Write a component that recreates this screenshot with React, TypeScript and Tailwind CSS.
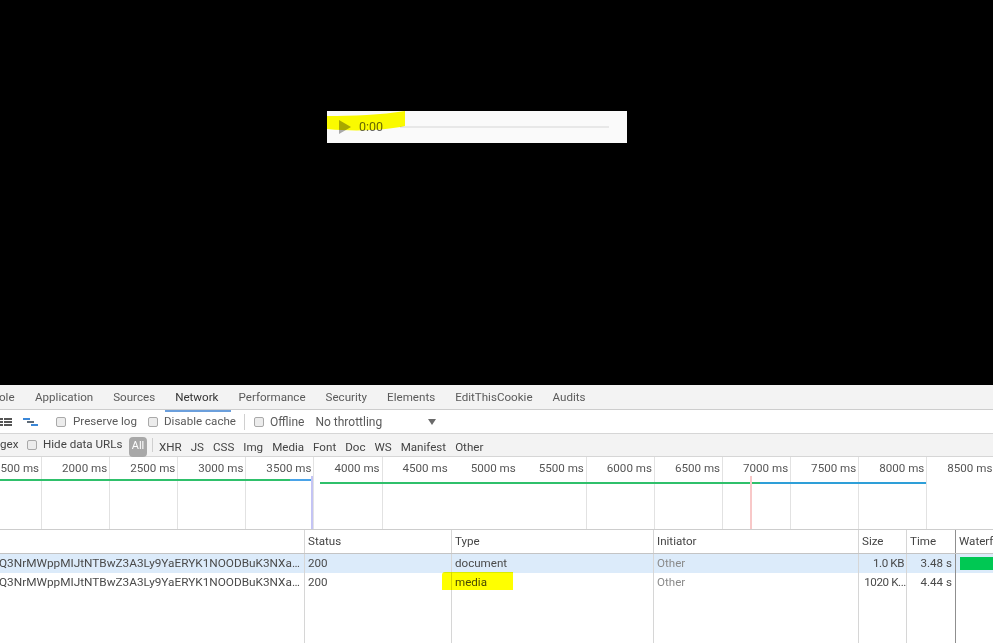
import React from "react";

const tabs = ["Application", "Sources", "Network", "Performance", "Security", "Elements", "EditThisCookie", "Audits"];
const filters = ["XHR", "JS", "CSS", "Img", "Media", "Font", "Doc", "WS", "Manifest", "Other"];
const ticks = [1500, 2000, 2500, 3000, 3500, 4000, 4500, 5000, 5500, 6000, 6500, 7000, 7500, 8000, 8500];
const noLine = [4500, 5000, 8500];
const name = "Q3NrMWppMIJtNTBwZ3A3Ly9YaERYK1NOODBuK3NXa...";
const columns = "grid grid-cols-[305px_147px_202px_205px_48px_49px_37px]";

const Check = ({ className = "" }: { className?: string }) => (
  <span className={`h-[10px] w-[10px] shrink-0 rounded-[2px] border border-[#a9a9a9] bg-[#ececec] ${className}`} />
);

const Cell = ({ children, className = "" }: { children?: React.ReactNode; className?: string }) => (
  <div className={`relative truncate border-r border-[#d6d6d6] pl-[3px] pr-[3px] ${className}`}>{children}</div>
);

const Row = ({ size, time, type, className = "" }: { size: React.ReactNode; time: string; type: React.ReactNode; className?: string }) => (
  <div className={`${columns} h-[19px] items-stretch leading-[19px] text-[#4a4a4a] ${className}`}>
    <Cell className="whitespace-nowrap text-[11.8px]">
      <span className="ml-[-4px]">{name}</span>
    </Cell>
    <Cell>200</Cell>
    <Cell className="overflow-visible">{type}</Cell>
    <Cell className="text-[#8a8a8a]">Other</Cell>
    <Cell className="pr-0! text-right tracking-[-0.4px]">{size}</Cell>
    <Cell className="border-r-[#8f8f8f] text-right">{time}</Cell>
    <div />
  </div>
);

export default function App() {
  return (
    <div className="flex h-[643px] w-[993px] flex-col overflow-hidden bg-black font-['Roboto',sans-serif] text-[11.6px]">
      {/* page area with the audio player */}
      <div className="flex h-[385px] shrink-0 items-start pl-[327px] pt-[111px]">
        <div className="relative flex h-[32px] w-[300px] items-center bg-[#fafafa] pl-[12px] pr-[18px]">
          <svg width="12" height="14" viewBox="0 0 12 14" className="shrink-0">
            <path d="M0 0 L12 7 L0 14 Z" fill="#a8a8a8" />
          </svg>
          <span className="ml-[8px] text-[12.5px] text-[#666]">0:00</span>
          <div className="ml-[17px] h-[2px] flex-1 bg-[#e8e8e8]" />
          <svg width="80" height="24" viewBox="0 0 80 24" className="absolute left-0 top-[-1px] mix-blend-multiply">
            <path d="M0 6 C25 6 55 5 78 1 L78 16 C60 20 30 22 0 19 Z" fill="#ffff00" />
          </svg>
        </div>
      </div>

      {/* devtools */}
      <div className="flex min-h-0 flex-1 flex-col bg-white">
        <div className="flex h-[25px] shrink-0 items-center gap-[20px] border-b border-[#cdcdcd] bg-[#f3f3f3] pt-[2px] text-[#5a5a5a]">
          <span className="ml-[-1px] w-[16px] whitespace-nowrap">ole</span>
          {tabs.map((t) => (
            <span
              key={t}
              className={t === "Network" ? "relative text-[#333] before:absolute before:bottom-[-5px] before:left-[-10px] before:right-[-12px] before:h-[2px] before:bg-[#6b9fdc] before:content-['']" : ""}
            >
              {t}
            </span>
          ))}
        </div>

        <div className="flex h-[24px] shrink-0 items-center border-b border-[#d6d6d6] text-[#5a5a5a]">
          <svg width="13" height="10" viewBox="0 0 13 10" className="shrink-0">
            <path d="M0 1h3v2H0zM0 4h3v2H0zM0 7h3v2H0zM4 1h8v2H4zM4 4h8v2H4zM4 7h8v2H4z" fill="#555" />
          </svg>
          <svg width="16" height="10" viewBox="0 0 16 10" className="ml-[10px] shrink-0">
            <path d="M0 1h7v2H0z" fill="#3b87d8" />
            <path d="M4 4h7v2H4z" fill="#5f6b78" />
            <path d="M8 7h7v2H8z" fill="#3b87d8" />
          </svg>
          <Check className="ml-[17px]" />
          <span className="ml-[7px]">Preserve log</span>
          <Check className="ml-[11px]" />
          <span className="ml-[6px]">Disable cache</span>
          <span className="ml-[8px] h-[16px] w-px bg-[#d0d0d0]" />
          <Check className="ml-[9px]" />
          <span className="ml-[6px] text-[12px]">Offline</span>
          <span className="ml-[11px] text-[12px]">No throttling</span>
          <svg width="8" height="6" viewBox="0 0 8 6" className="ml-[46px]">
            <path d="M0 0h8L4 6z" fill="#6a6a6a" />
          </svg>
        </div>

        <div className="flex h-[23px] shrink-0 items-center border-b border-[#d6d6d6] bg-[#f3f3f3] text-[#444]">
          <span className="w-[18px] whitespace-nowrap">gex</span>
          <Check className="ml-[9px]" />
          <span className="ml-[6px] w-[80px] whitespace-nowrap">Hide data URLs</span>
          <span className="ml-[6px] mt-[3px] flex h-[20px] w-[18px] items-center justify-center rounded-[4px] bg-[#a8a8a8] text-[11px] text-white">All</span>
          <span className="ml-[5px] h-[14px] w-px bg-[#cfcfcf]" />
          <div className="ml-[6px] flex gap-[9px] pt-[5px]">
            {filters.map((f) => (
              <span key={f}>{f}</span>
            ))}
          </div>
        </div>

        {/* overview timeline */}
        <div className="relative h-[73px] shrink-0 overflow-hidden border-b border-[#cdcdcd]">
          <div className="ml-[-26px] flex h-full w-max">
            {ticks.map((t) => (
              <div
                key={t}
                className={`h-full w-[68.1px] shrink-0 whitespace-nowrap border-r pt-[4px] pr-[2px] text-right leading-[15px] text-[#555] ${noLine.includes(t) ? "border-transparent" : "border-[#e2e2e2]"}`}
              >
                {t} ms
              </div>
            ))}
          </div>
          <div className="absolute left-0 top-[22px] h-[2px] w-[290px] bg-[#2fc06b]" />
          <div className="absolute left-[290px] top-[22px] h-[2px] w-[22px] bg-[#4aa3e8]" />
          <div className="absolute left-[320px] top-[25px] h-[2px] w-[440px] bg-[#2fc06b]" />
          <div className="absolute left-[760px] top-[25px] h-[2px] w-[166px] bg-[#2e9fd8]" />
          <div className="absolute left-[311px] top-[19px] bottom-0 w-[2px] bg-[#c4c4f4]" />
          <div className="absolute left-[750px] top-[19px] bottom-0 w-[2px] bg-[#f8c8c8]" />
        </div>

        {/* request table */}
        <div className="flex min-h-0 flex-1 flex-col">
          <div className={`${columns} h-[24px] shrink-0 border-b border-[#c4c4c4] leading-[23px] text-[#444]`}>
            <Cell />
            <Cell>Status</Cell>
            <Cell>Type</Cell>
            <Cell>Initiator</Cell>
            <Cell>Size</Cell>
            <Cell className="border-r-[#8f8f8f]">Time</Cell>
            <div className="overflow-hidden whitespace-nowrap pl-[3px]">Waterfall</div>
          </div>
          <div className="relative">
            <Row className="bg-[#dcebfa]" size={<span className="mr-[2px]">1.0 KB</span>} time="3.48 s" type="document" />
            <div className="absolute right-0 top-[3px] h-[13px] w-[33px] bg-[#00c853]" />
          </div>
          <Row
            size="1020 K..."
            time="4.44 s"
            type={
              <>
                media
                <span className="absolute left-[-10px] top-[-1px] h-[18px] w-[71px] rounded-tl-[3px] bg-[#ffff00] mix-blend-multiply" />
              </>
            }
          />
          <div className={`${columns} flex-1`}>
            <Cell />
            <Cell />
            <Cell />
            <Cell />
            <Cell />
            <Cell className="border-r-[#8f8f8f]" />
            <div />
          </div>
        </div>
      </div>
    </div>
  );
}
